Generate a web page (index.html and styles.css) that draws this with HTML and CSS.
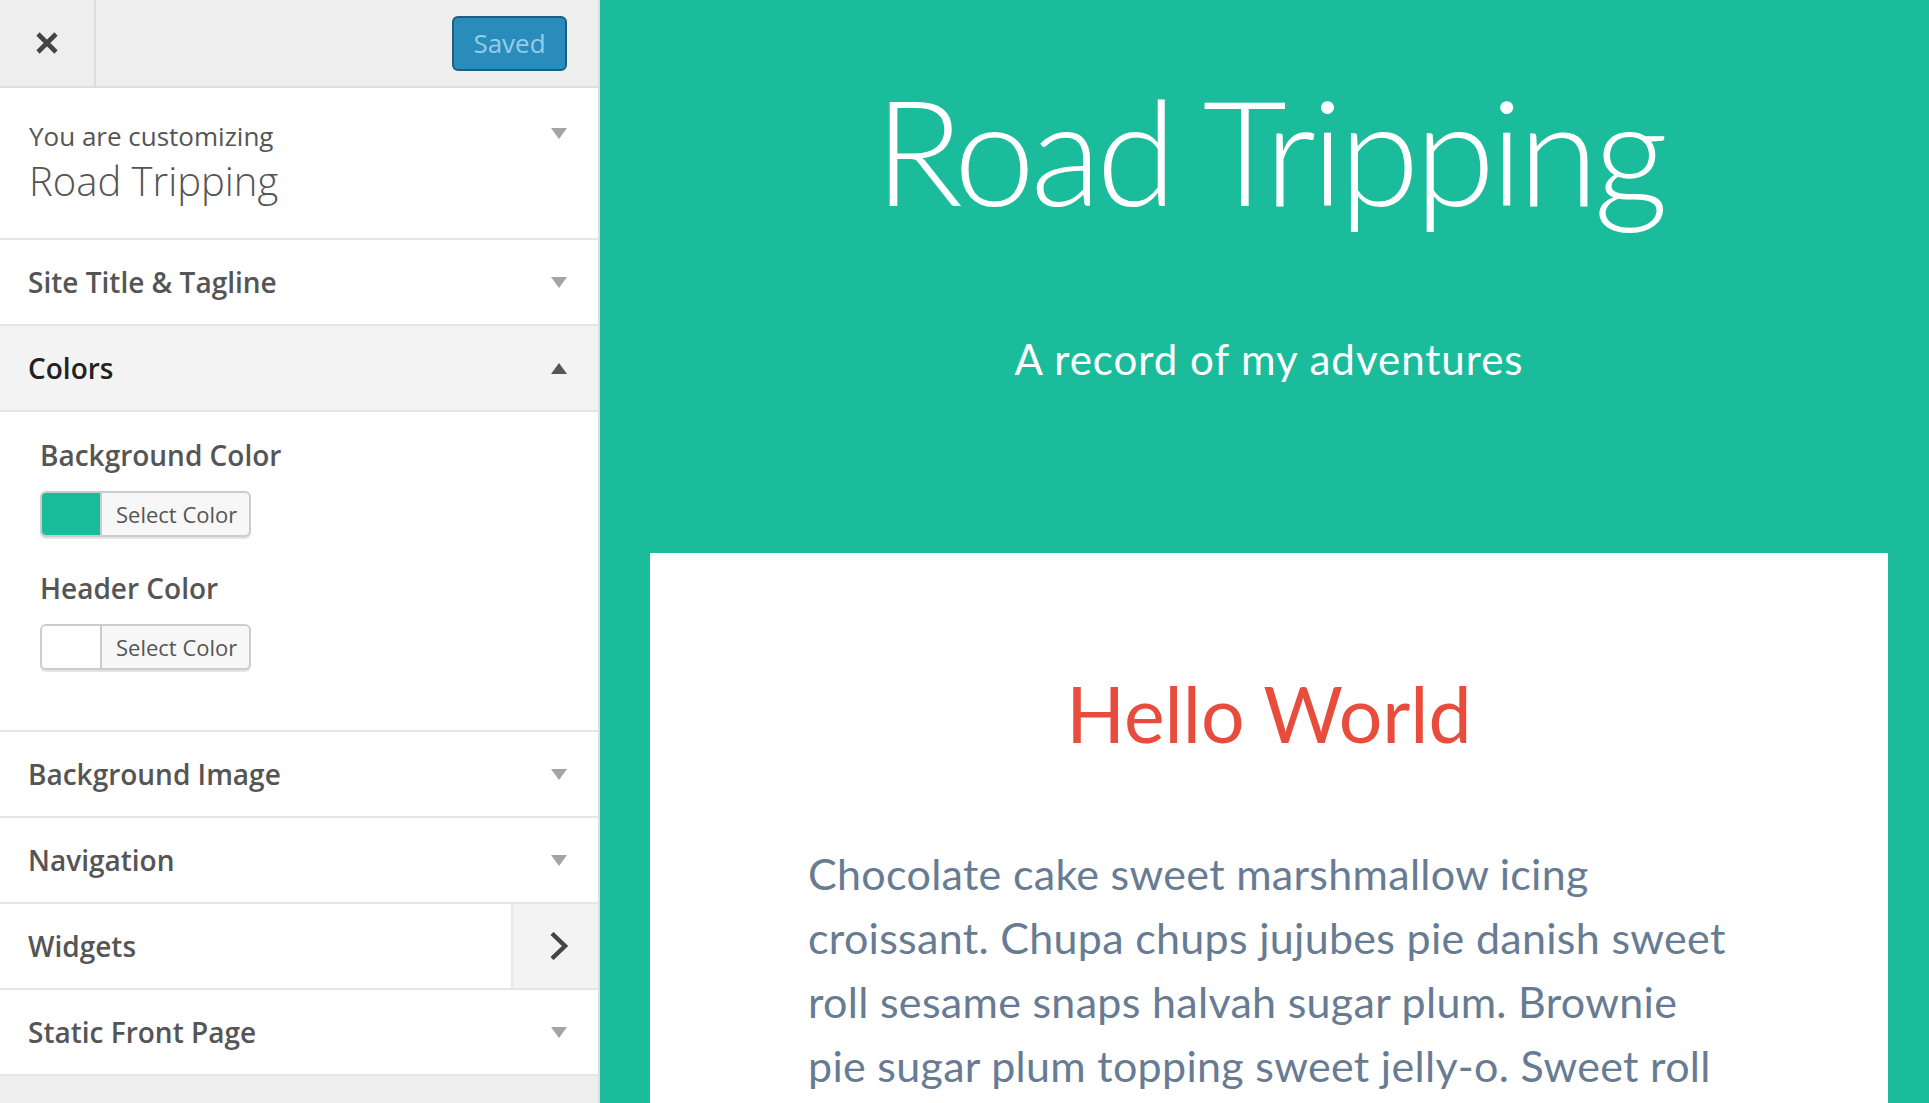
FILE: index.html
```html
<!DOCTYPE html>
<html lang="en">
<head>
<meta charset="utf-8">
<title>Customize: Road Tripping</title>
<link rel="stylesheet" href="styles.css">
</head>
<body>
<aside class="sidebar">
  <header class="topbar">
    <button class="close" aria-label="Close">
      <svg width="22" height="22" viewBox="0 0 22 22"><path d="M2 2 L20 20 M20 2 L2 20" stroke="#444" stroke-width="4.6" fill="none"/></svg>
    </button>
    <div class="topbar-fill"></div>
    <button class="saved" disabled>Saved</button>
  </header>

  <div class="info">
    <div class="info-text">
      <span class="notice">You are customizing</span>
      <span class="theme-name">Road Tripping</span>
    </div>
    <svg class="tri" width="16" height="11" viewBox="0 0 16 11"><polygon points="0,0 16,0 8,11" fill="#a0a5aa"/></svg>
  </div>

  <div class="section">
    <h3 class="section-title">Site Title &amp; Tagline</h3>
    <svg class="tri" width="16" height="11" viewBox="0 0 16 11"><polygon points="0,0 16,0 8,11" fill="#a0a5aa"/></svg>
  </div>

  <div class="section open">
    <h3 class="section-title">Colors</h3>
    <svg class="tri" width="16" height="11" viewBox="0 0 16 11"><polygon points="0,11 16,11 8,0" fill="#555"/></svg>
  </div>
  <div class="section-content">
    <div class="control">
      <span class="control-title">Background Color</span>
      <div class="color-btn"><span class="swatch teal"></span><span class="color-label">Select Color</span></div>
    </div>
    <div class="control">
      <span class="control-title">Header Color</span>
      <div class="color-btn"><span class="swatch white"></span><span class="color-label">Select Color</span></div>
    </div>
  </div>

  <div class="section">
    <h3 class="section-title">Background Image</h3>
    <svg class="tri" width="16" height="11" viewBox="0 0 16 11"><polygon points="0,0 16,0 8,11" fill="#a0a5aa"/></svg>
  </div>

  <div class="section">
    <h3 class="section-title">Navigation</h3>
    <svg class="tri" width="16" height="11" viewBox="0 0 16 11"><polygon points="0,0 16,0 8,11" fill="#a0a5aa"/></svg>
  </div>

  <div class="section panel">
    <h3 class="section-title">Widgets</h3>
    <div class="chev-box">
      <svg width="18" height="28" viewBox="0 0 18 28"><polyline points="2,1.5 15,14 2,26.5" stroke="#444" stroke-width="4.4" fill="none"/></svg>
    </div>
  </div>

  <div class="section">
    <h3 class="section-title">Static Front Page</h3>
    <svg class="tri" width="16" height="11" viewBox="0 0 16 11"><polygon points="0,0 16,0 8,11" fill="#a0a5aa"/></svg>
  </div>
</aside>

<main class="preview">
  <header class="site-header">
    <h1 class="site-title">Road Tripping</h1>
    <p class="site-tagline">A record of my adventures</p>
  </header>
  <article class="post">
    <h2 class="post-title">Hello World</h2>
    <p class="post-body">Chocolate cake sweet marshmallow icing croissant. Chupa chups jujubes pie danish sweet roll sesame snaps halvah sugar plum. Brownie pie sugar plum topping sweet jelly-o. Sweet roll</p>
  </article>
</main>
</body>
</html>
```

FILE: styles.css
```css
* { box-sizing: border-box; }

html, body {
  margin: 0;
  height: 100%;
}

body {
  display: flex;
  overflow: hidden;
  font-family: "Open Sans", "Liberation Sans", sans-serif;
}

/* ---------- Sidebar ---------- */
.sidebar {
  width: 600px;
  flex: 0 0 600px;
  height: 100%;
  background: #eeeeee;
  border-right: 2px solid #dddddd;
  display: flex;
  flex-direction: column;
}

.topbar {
  height: 88px;
  flex: 0 0 88px;
  display: flex;
  align-items: center;
  border-bottom: 2px solid #dddddd;
  background: #eeeeee;
}

.close {
  width: 96px;
  height: 86px;
  border: 0;
  border-right: 2px solid #dddddd;
  background: transparent;
  display: flex;
  align-items: center;
  justify-content: center;
  padding: 0;
}

.topbar-fill { flex: 1; }

.saved {
  height: 55px;
  width: 115px;
  margin-right: 31px;
  border: 2px solid #1b607f;
  border-radius: 6px;
  background: #298cba;
  color: #94cde7;
  font-family: "Open Sans", "Liberation Sans", sans-serif;
  font-size: 26px;
  padding: 0;
  line-height: 48px;
}

.info {
  height: 152px;
  flex: 0 0 152px;
  background: #ffffff;
  border-bottom: 2px solid #e5e5e5;
  display: flex;
  justify-content: space-between;
  align-items: flex-start;
  padding: 30px 31px 0 29px;
}

.info-text {
  display: flex;
  flex-direction: column;
  color: #555555;
}

.notice {
  font-size: 26px;
  line-height: 36px;
}

.theme-name {
  font-size: 40px;
  font-weight: 300;
  line-height: 48px;
  margin-top: 3px;
}

.info .tri { margin-top: 10px; }

.section {
  height: 86px;
  flex: 0 0 86px;
  background: #ffffff;
  border-bottom: 2px solid #e5e5e5;
  display: flex;
  align-items: center;
  justify-content: space-between;
  padding: 0 31px 0 28px;
}

.section-title {
  margin: 0;
  font-size: 28px;
  font-weight: 600;
  color: #555555;
}

.section.open { background: #f3f3f3; }
.section.open .section-title { color: #222222; }

.section.panel {
  padding-right: 0;
  align-items: stretch;
}
.section.panel .section-title { align-self: center; }

.chev-box {
  width: 87px;
  background: #f3f3f3;
  border-left: 2px solid #e8e8e8;
  display: flex;
  align-items: center;
  justify-content: flex-end;
  padding-right: 30px;
}

.section-content {
  height: 320px;
  flex: 0 0 320px;
  background: #ffffff;
  border-bottom: 2px solid #e5e5e5;
  padding: 24px 40px 0 40px;
  display: flex;
  flex-direction: column;
  gap: 32px;
}

.control {
  display: flex;
  flex-direction: column;
  align-items: flex-start;
  gap: 17px;
}

.control-title {
  font-size: 28px;
  font-weight: 600;
  color: #555555;
  line-height: 38px;
}

.color-btn {
  display: flex;
  height: 46px;
  border: 2px solid #cccccc;
  border-radius: 6px;
  box-shadow: 0 2px 0 #e4e4e4;
  background: #f7f7f7;
  overflow: hidden;
}

.swatch {
  width: 60px;
  border-right: 2px solid #cccccc;
}
.swatch.teal { background: #1abc9c; }
.swatch.white { background: #ffffff; }

.color-label {
  padding: 0 12px 0 14px;
  font-size: 22px;
  line-height: 42px;
  color: #555555;
}

/* ---------- Preview ---------- */
.preview {
  flex: 1;
  height: 100%;
  background: #1bbc9b;
  padding: 0 41px 0 50px;
  display: flex;
  flex-direction: column;
  overflow: hidden;
  font-family: Lato, "Open Sans", sans-serif;
}

.site-header {
  text-align: center;
  color: #ffffff;
  padding-top: 62px;
}

.site-title {
  margin: 0;
  font-size: 146px;
  font-weight: 300;
  line-height: 1.2;
  letter-spacing: -4.8px;
}

.site-tagline {
  margin: 98px 0 0 0;
  font-size: 42px;
  line-height: 48px;
  letter-spacing: 1px;
}

.post {
  margin-top: 170px;
  flex: 1;
  background: #ffffff;
  padding: 115px 158px 0 158px;
}

.post-title {
  margin: 0;
  text-align: center;
  color: #e74c3c;
  font-size: 77px;
  font-weight: 400;
  line-height: 90px;
}

.post-body {
  margin: 84px 0 0 0;
  font-size: 43px;
  line-height: 64px;
  letter-spacing: 0.3px;
  color: #677b93;
}
```
